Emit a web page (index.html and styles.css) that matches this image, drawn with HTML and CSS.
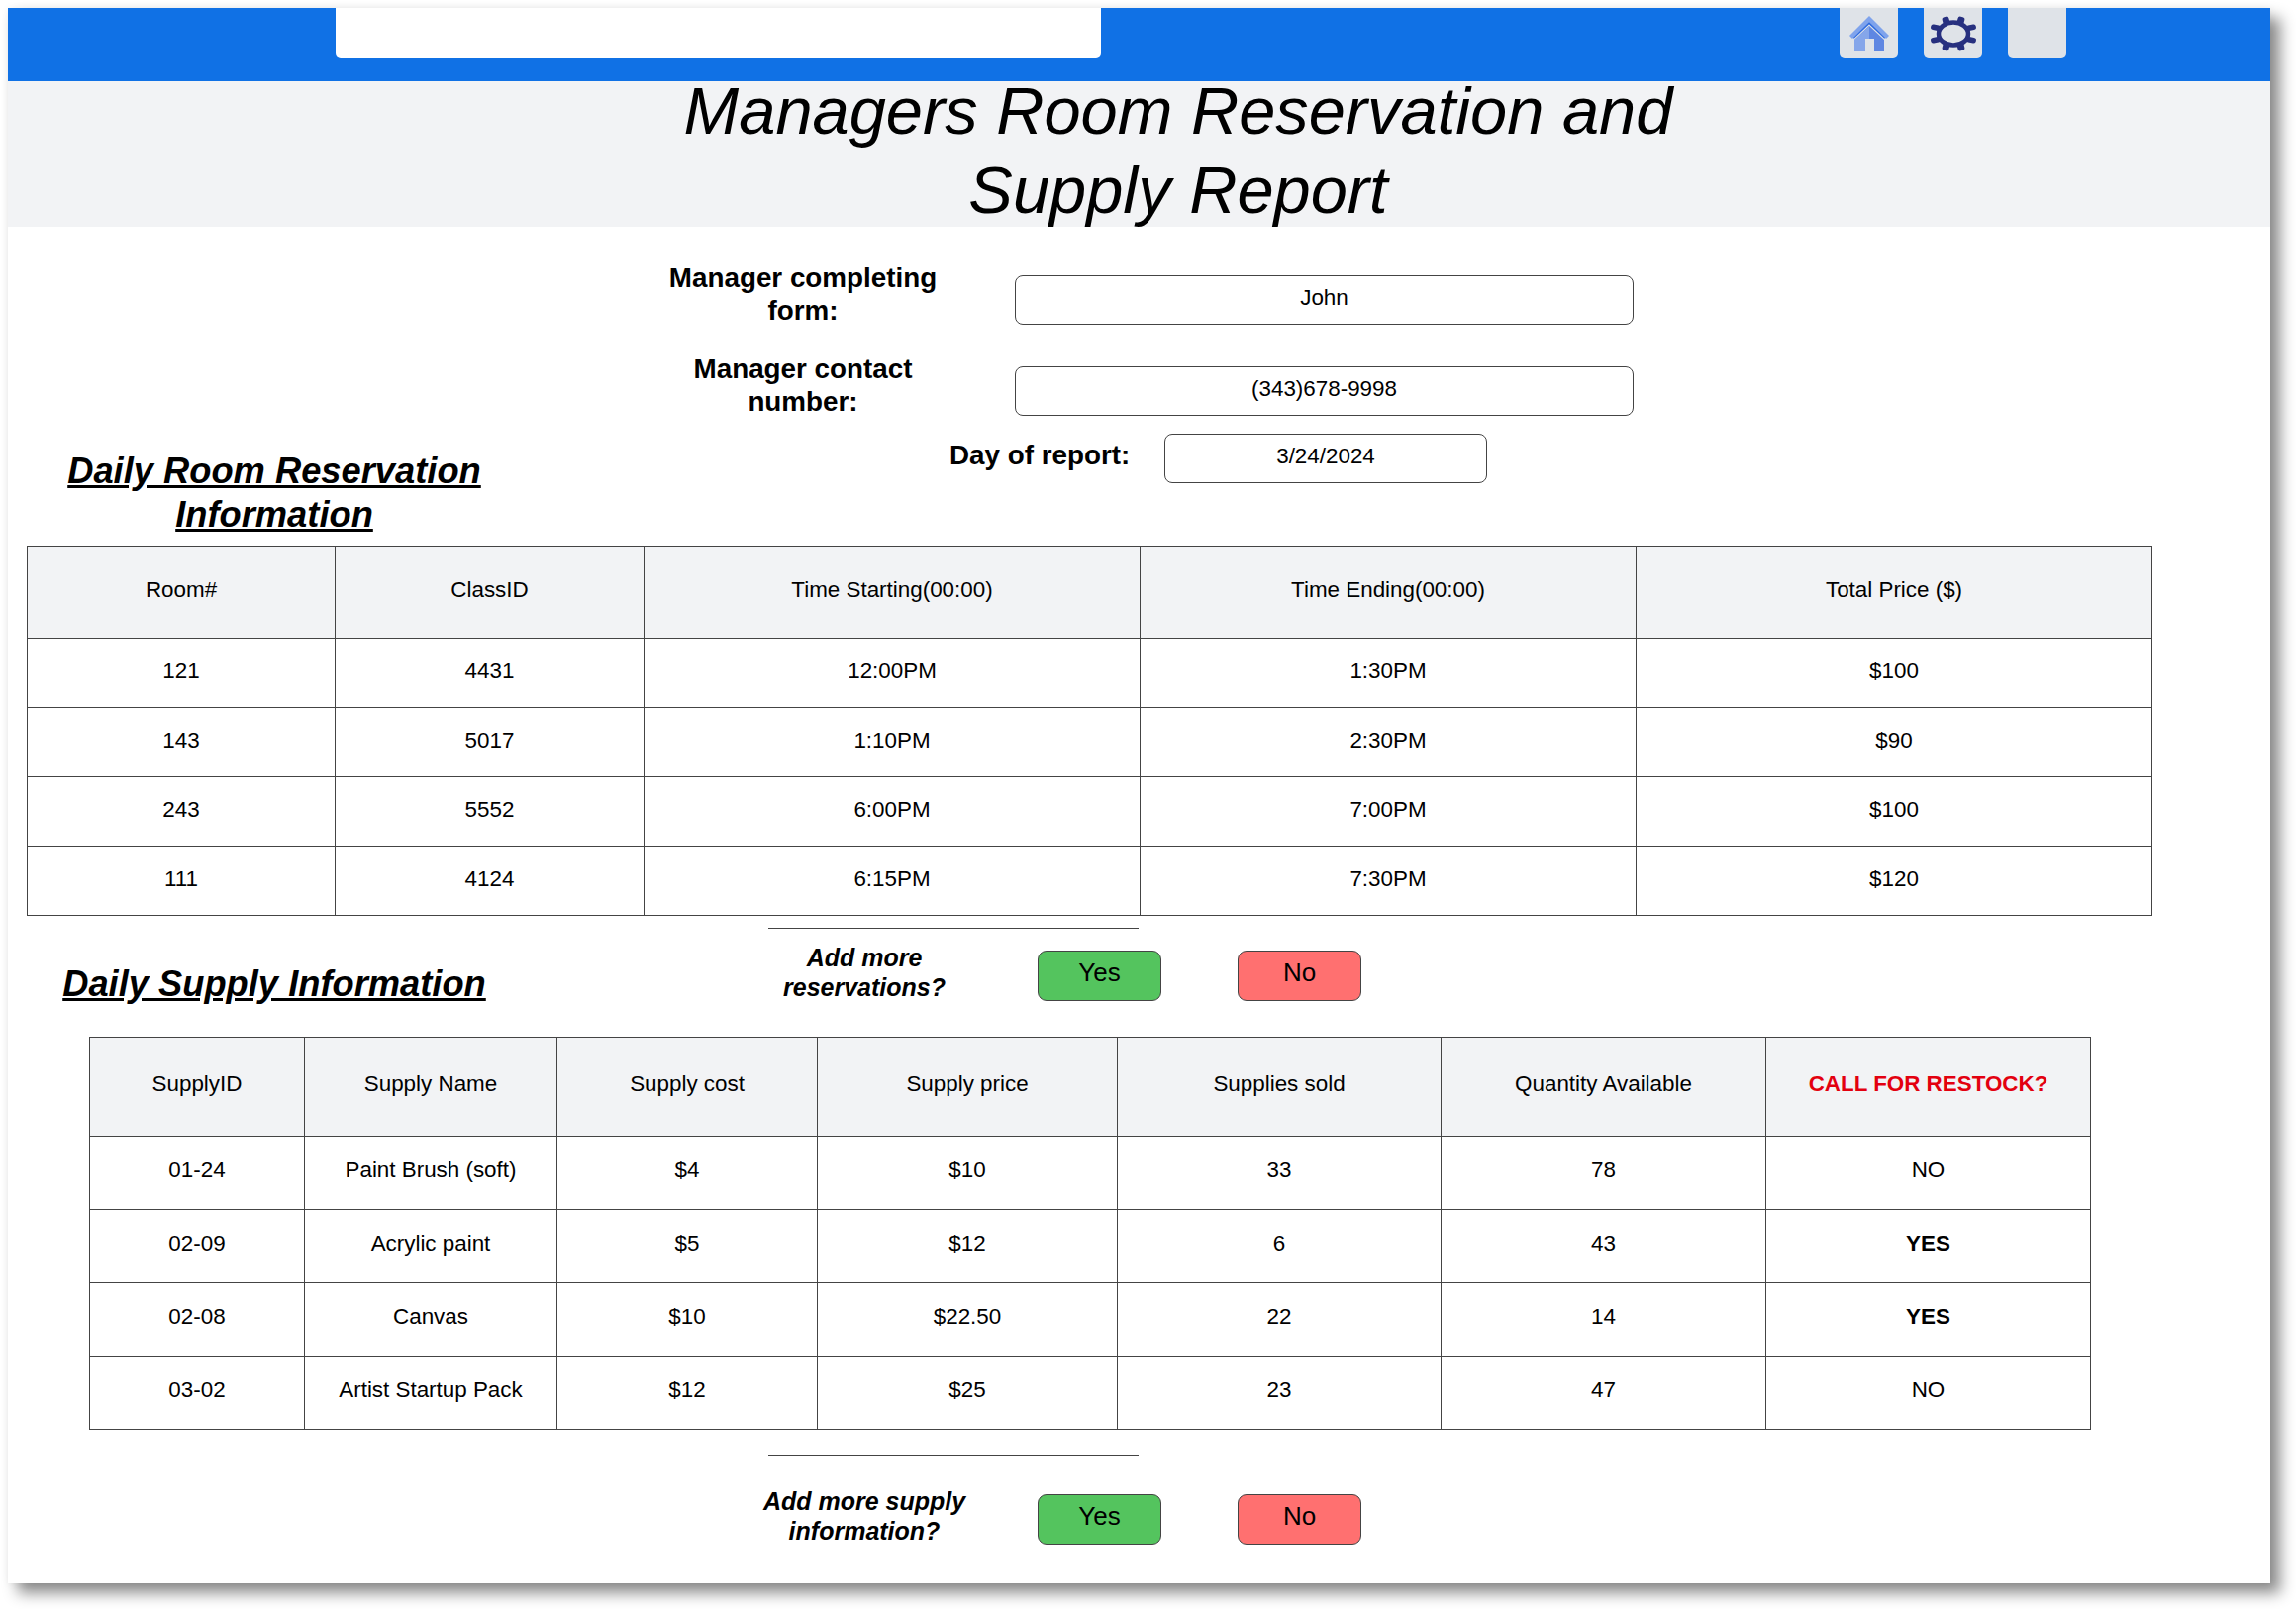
FILE: index.html
```html
<!DOCTYPE html>
<html lang="en">
<head>
    <meta charset="UTF-8">
    <title>Managers Room Reservation and Supply Report</title>
    <link rel="stylesheet" href="styles.css">
</head>
<body>
    <div class="page">
        <header class="topbar">
            <div class="search"></div>
            <div class="icon-btn icon-home">
                <svg width="42" height="40" viewBox="0 0 42 40">
                    <path d="M21 12 L6 26 V38 H17 V25 H26 V38 H36 V26 Z" fill="#5f87e2"/>
                    <path d="M21 12 L6 26 V38 H17 V25 H21 Z" fill="#85a6ea"/>
                    <path d="M5 24 L21 9 L37 24" fill="none" stroke="#2e6be0" stroke-width="2"/>
                    <path d="M1 22 L21 2 L41 22 L38 25 L21 8 L4 25 Z" fill="#7fa3ec"/>
                </svg>
            </div>
            <div class="icon-btn icon-gear">
                <svg width="48" height="36" viewBox="0 0 48 36">
                    <g fill="#27307f">
                        <rect x="13" y="1" width="7" height="8" rx="2.5" transform="rotate(-15 16 5)"/>
                        <rect x="28" y="1" width="7" height="8" rx="2.5" transform="rotate(15 32 5)"/>
                        <rect x="13" y="27" width="7" height="8" rx="2.5" transform="rotate(15 16 31)"/>
                        <rect x="28" y="27" width="7" height="8" rx="2.5" transform="rotate(-15 32 31)"/>
                        <rect x="1" y="9" width="10" height="5.5" rx="2.5" transform="rotate(12 6 12)"/>
                        <rect x="37" y="9" width="10" height="5.5" rx="2.5" transform="rotate(-12 42 12)"/>
                        <rect x="1" y="21.5" width="10" height="5.5" rx="2.5" transform="rotate(-12 6 24)"/>
                        <rect x="37" y="21.5" width="10" height="5.5" rx="2.5" transform="rotate(12 42 24)"/>
                    </g>
                    <ellipse cx="24" cy="18" rx="15" ry="11.5" fill="none" stroke="#27307f" stroke-width="4.5"/>
                </svg>
            </div>
            <div class="icon-btn"></div>
        </header>

        <div class="title-band">
            <h1>Managers Room Reservation and<br>Supply Report</h1>
        </div>

        <main>
            <div class="field-row">
                <label class="field-label">Manager completing form:</label>
                <div class="field-box">John</div>
            </div>
            <div class="field-row">
                <label class="field-label">Manager contact number:</label>
                <div class="field-box">(343)678-9998</div>
            </div>

            <div class="report-row">
                <h2 class="section-title">Daily Room Reservation Information</h2>
                <label class="day-label">Day of report:</label>
                <div class="field-box day-box">3/24/2024</div>
            </div>

            <table class="grid room-table">
                <colgroup>
                    <col class="r1"><col class="r2"><col class="r3"><col class="r4"><col class="r5">
                </colgroup>
                <thead>
                    <tr>
                        <th>Room#</th>
                        <th>ClassID</th>
                        <th>Time Starting(00:00)</th>
                        <th>Time Ending(00:00)</th>
                        <th>Total Price ($)</th>
                    </tr>
                </thead>
                <tbody>
                    <tr><td>121</td><td>4431</td><td>12:00PM</td><td>1:30PM</td><td>$100</td></tr>
                    <tr><td>143</td><td>5017</td><td>1:10PM</td><td>2:30PM</td><td>$90</td></tr>
                    <tr><td>243</td><td>5552</td><td>6:00PM</td><td>7:00PM</td><td>$100</td></tr>
                    <tr><td>111</td><td>4124</td><td>6:15PM</td><td>7:30PM</td><td>$120</td></tr>
                </tbody>
            </table>

            <div class="section-row">
                <h2 class="section-title supply-title">Daily Supply Information</h2>
                <div class="actions">
                    <hr class="rule">
                    <div class="prompt-row">
                        <p class="prompt">Add more reservations?</p>
                        <button class="btn btn-yes">Yes</button>
                        <button class="btn btn-no">No</button>
                    </div>
                </div>
            </div>

            <table class="grid supply-table">
                <colgroup>
                    <col class="s1"><col class="s2"><col class="s3"><col class="s4"><col class="s5"><col class="s6"><col class="s7">
                </colgroup>
                <thead>
                    <tr>
                        <th>SupplyID</th>
                        <th>Supply Name</th>
                        <th>Supply cost</th>
                        <th>Supply price</th>
                        <th>Supplies sold</th>
                        <th>Quantity Available</th>
                        <th class="restock">CALL FOR RESTOCK?</th>
                    </tr>
                </thead>
                <tbody>
                    <tr><td>01-24</td><td>Paint Brush (soft)</td><td>$4</td><td>$10</td><td>33</td><td>78</td><td>NO</td></tr>
                    <tr><td>02-09</td><td>Acrylic paint</td><td>$5</td><td>$12</td><td>6</td><td>43</td><td class="yes">YES</td></tr>
                    <tr><td>02-08</td><td>Canvas</td><td>$10</td><td>$22.50</td><td>22</td><td>14</td><td class="yes">YES</td></tr>
                    <tr><td>03-02</td><td>Artist Startup Pack</td><td>$12</td><td>$25</td><td>23</td><td>47</td><td>NO</td></tr>
                </tbody>
            </table>

            <div class="section-row last-row">
                <div class="actions">
                    <hr class="rule">
                    <div class="prompt-row">
                        <p class="prompt">Add more supply information?</p>
                        <button class="btn btn-yes">Yes</button>
                        <button class="btn btn-no">No</button>
                    </div>
                </div>
            </div>
        </main>
    </div>
</body>
</html>
```

FILE: styles.css
```css
html, body {
    height: 1625px;
    overflow: hidden;
}
body {
    margin: 0;
    padding-top: 8px;
    box-sizing: border-box;
    font-family: "Liberation Sans", Arial, sans-serif;
    color: #000;
    background-color: #fff;
}
.page {
    margin-left: 8px;
    width: 2285px;
    height: 1591px;
    background-color: #fff;
    box-shadow: 10px 10px 14px rgba(0, 0, 0, 0.45), 0 0 8px rgba(0, 0, 0, 0.06);
}
.topbar {
    display: flex;
    height: 74px;
    background-color: #1071e5;
    padding-left: 331px;
    box-sizing: border-box;
}
.search {
    width: 773px;
    height: 51px;
    background-color: #fff;
    border-radius: 0 0 5px 5px;
    margin-right: 746px;
}
.icon-btn {
    display: flex;
    align-items: center;
    justify-content: center;
    width: 59px;
    height: 51px;
    background-color: #dfe3e8;
    border-radius: 0 0 5px 5px;
    margin-right: 26px;
}
.title-band {
    height: 147px;
    padding-left: 79px;
    box-sizing: border-box;
    background-color: #f2f3f5;
    text-align: center;
}
.title-band h1 {
    margin: 0;
    position: relative;
    top: -10px;
    font-size: 66.8px;
    font-weight: normal;
    font-style: italic;
    line-height: 80px;
}
main {
    padding-top: 36px;
}
.field-row {
    display: flex;
    align-items: flex-start;
    margin-left: 653px;
    margin-bottom: 27px;
}
.field-label {
    width: 300px;
    font-size: 27.8px;
    font-weight: bold;
    line-height: 32.5px;
    text-align: center;
    margin-right: 64px;
}
.field-box {
    width: 625px;
    height: 50px;
    margin-top: 13px;
    box-sizing: border-box;
    border: 1px solid #444;
    border-radius: 8px;
    font-size: 22.4px;
    line-height: 44px;
    text-align: center;
}
.report-row {
    display: flex;
    align-items: flex-start;
    height: 113px;
    margin-top: -11px;
}
.section-title {
    width: 500px;
    margin: 16px 0 0 19px;
    font-size: 36.3px;
    font-weight: bold;
    font-style: italic;
    line-height: 44px;
    text-decoration: underline;
    text-align: center;
}
.day-label {
    width: 217px;
    margin-left: 432px;
    font-size: 27.8px;
    font-weight: bold;
    line-height: 44px;
}
.day-box {
    width: 326px;
    margin-top: 0;
}
.grid {
    border-collapse: collapse;
    table-layout: fixed;
    text-align: center;
    font-size: 22.4px;
}
.grid th, .grid td {
    border: 1px solid #444;
    padding: 0 0 4px;
    font-weight: normal;
}
.grid th {
    background-color: #f2f3f5;
}
.room-table {
    margin-left: 19px;
    width: 2146px;
}
.room-table thead tr {
    height: 93px;
}
.room-table tbody tr {
    height: 70px;
}
.r1 { width: 311px; }
.r2 { width: 312px; }
.r3 { width: 501px; }
.r4 { width: 501px; }
.r5 { width: 521px; }
.section-row {
    display: grid;
    grid-template-columns: 745px auto;
    height: 122px;
}
.supply-title {
    margin-top: 47px;
}
.actions {
    grid-column: 2;
}
.rule {
    width: 374px;
    margin: 12px 0 14px 23px;
    border: none;
    border-top: 1px solid #444;
}
.prompt-row {
    display: flex;
    align-items: flex-start;
}
.prompt {
    width: 240px;
    margin: 0 55px 0 0;
    font-size: 25px;
    font-weight: bold;
    font-style: italic;
    line-height: 30px;
    text-align: center;
}
.btn {
    width: 125px;
    height: 51px;
    margin-top: 8px;
    margin-right: 77px;
    padding: 0 0 6px;
    border: 1px solid #444;
    border-radius: 9px;
    font-family: inherit;
    font-size: 26px;
    color: #000;
}
.btn-yes {
    background-color: #54c45e;
}
.btn-no {
    background-color: #ff7070;
}
.supply-table {
    margin-left: 82px;
    width: 2021px;
}
.supply-table th, .supply-table td {
    padding-bottom: 6px;
}
.supply-table thead tr {
    height: 100px;
}
.supply-table tbody tr {
    height: 74px;
}
.s1 { width: 217px; }
.s2 { width: 255px; }
.s3 { width: 263px; }
.s4 { width: 303px; }
.s5 { width: 327px; }
.s6 { width: 328px; }
.s7 { width: 328px; }
.restock {
    color: #e3000f;
    font-weight: bold !important;
}
.yes {
    font-weight: bold !important;
}
.last-row {
    height: auto;
    margin-top: 13px;
}
.last-row .rule {
    margin-bottom: 31px;
}
```
